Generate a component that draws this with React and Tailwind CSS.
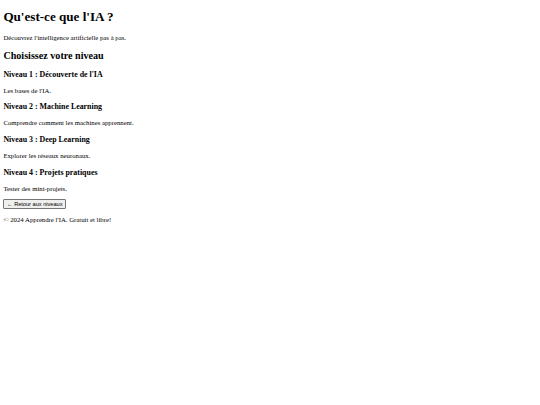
export default function App() {
  const levels = [
    { title: "Niveau 1 : Découverte de l'IA", text: "Les bases de l'IA." },
    { title: "Niveau 2 : Machine Learning", text: "Comprendre comment les machines apprennent." },
    { title: "Niveau 3 : Deep Learning", text: "Explorer les réseaux neuronaux." },
    { title: "Niveau 4 : Projets pratiques", text: "Tester des mini-projets." },
  ];

  return (
    <div className="min-h-[405px] bg-white text-black font-['Liberation_Serif','Times_New_Roman',serif] leading-[1.15] pt-px">
      <div className="mx-[3.375px] -mt-px">
        <header>
          <h1 className="text-[13.1px] font-bold my-[9.05px] leading-[15.5px]">Qu'est-ce que l'IA&#8239;?</h1>
          <p className="text-[6.75px] my-[6.75px]">Découvrez l'intelligence artificielle pas à pas.</p>
        </header>

        <main>
          <h2 className="text-[10.125px] font-bold my-[0.83em] leading-[1.15]">Choisissez votre niveau</h2>
          {levels.map((lvl) => (
            <section key={lvl.title}>
              <h3 className="text-[7.9px] font-bold my-[1em] leading-[1.15]">{lvl.title}</h3>
              <p className="text-[6.75px] my-[1em]">{lvl.text}</p>
            </section>
          ))}
          <div className="text-[6.75px] my-[1em]">
            <button className="font-['Liberation_Sans',Arial,sans-serif] text-[5.625px] leading-[1.15] px-[2.6px] py-[0.9px] bg-[#efefef] border-[0.8px] border-[#767676] rounded-[1px] text-black">
              ← Retour aux niveaux
            </button>
          </div>
        </main>

        <footer>
          <p className="text-[6.75px] my-[1em]">© 2024 Apprendre l'IA. Gratuit et libre!</p>
        </footer>
      </div>
    </div>
  );
}
